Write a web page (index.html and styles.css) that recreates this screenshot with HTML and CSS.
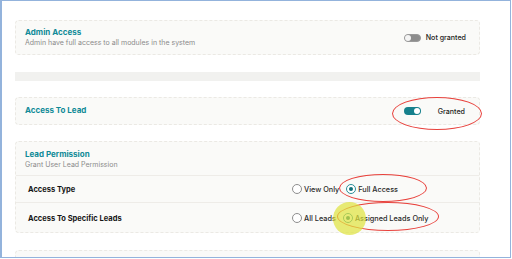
FILE: index.html
```html
<!DOCTYPE html>
<html>
<head>
<meta charset="utf-8">
<link rel="stylesheet" href="styles.css">
</head>
<body>
<div class="frame">
  <section class="card card-admin">
    <div class="head">
      <div class="title">Admin Access</div>
      <div class="sub">Admin have full access to all modules in the system</div>
    </div>
    <div class="switch-wrap">
      <span class="switch off"><span class="knob"></span></span>
      <span class="switch-label">Not granted</span>
    </div>
  </section>

  <div class="band"></div>

  <section class="card card-lead">
    <div class="head">
      <div class="title">Access To Lead</div>
    </div>
    <div class="switch-wrap">
      <span class="switch on"><span class="knob"></span></span>
      <span class="switch-label granted">Granted</span>
    </div>
  </section>

  <section class="card card-perm">
    <div class="perm-head">
      <div class="title">Lead Permission</div>
      <div class="sub">Grant User Lead Permission</div>
    </div>
    <div class="row">
      <div class="row-label">Access Type</div>
      <div class="opts">
        <label class="opt"><span class="radio"></span>View Only</label>
        <label class="opt"><span class="radio checked"></span>Full Access</label>
      </div>
    </div>
    <div class="row row-last">
      <div class="row-label">Access To Specific Leads</div>
      <div class="opts">
        <label class="opt"><span class="radio"></span>All Leads</label>
        <label class="opt"><span class="radio checked"></span>Assigned Leads Only</label>
      </div>
    </div>
  </section>

  <section class="card card-next"></section>

  <div class="ring ring-granted"></div>
  <div class="ring ring-full"></div>
  <div class="ring ring-assigned"></div>
  <div class="click-dot"></div>
</div>
</body>
</html>
```

FILE: styles.css
```css
html, body {
  margin: 0;
  padding: 0;
  background: #ffffff;
}
body {
  font-family: Inter, "Noto Sans", "Liberation Sans", sans-serif;
}
.frame {
  position: relative;
  box-sizing: border-box;
  width: 511px;
  height: 258px;
  border: 1px solid #93b3dc;
  border-left-width: 2px;
  padding: 19px 30px 0 13px;
  overflow: hidden;
  background: #ffffff;
}
.card {
  box-sizing: border-box;
  background: #fafaf8;
  border: 1px dashed #ebe9e4;
  border-radius: 4px;
}
.card-admin {
  height: 35px;
  display: flex;
  align-items: center;
  justify-content: space-between;
  padding: 0 13px 0 9px;
}
.title {
  font-size: 8px;
  font-weight: 700;
  color: #0f8a97;
  line-height: 10px;
}
.sub {
  font-size: 7px;
  color: #8b8b8b;
  line-height: 9px;
  margin-top: 1px;
}
.card-admin .head {
  margin-top: -1px;
}
.switch-wrap {
  display: flex;
  align-items: center;
}
.switch {
  position: relative;
  box-sizing: border-box;
  width: 17px;
  height: 8px;
  border-radius: 4px;
  display: inline-block;
}
.switch.off {
  background: #8d8d8d;
  border: 1px solid #9a9a9a;
}
.switch.on {
  background: #16808c;
}
.knob {
  position: absolute;
  top: 1px;
  width: 6px;
  height: 6px;
  border-radius: 50%;
  background: #ffffff;
}
.switch.off .knob {
  top: 0;
  left: 0;
  background: #f4f4f4;
}
.switch.on .knob {
  right: 1px;
}
.switch-label {
  font-size: 7.1px;
  font-weight: 500;
  color: #222222;
  margin-left: 5px;
}
.switch-label.granted {
  margin-left: 17px;
}
.band {
  height: 9px;
  margin-top: 17px;
  background: #f1f1ef;
}
.card-lead {
  margin-top: 16px;
  height: 28px;
  display: flex;
  align-items: center;
  justify-content: space-between;
  padding: 0 14px 0 9px;
}
.card-lead .title {
  margin-top: -2px;
}
.card-perm {
  margin-top: 16px;
  height: 92px;
}
.perm-head {
  height: 34px;
  box-sizing: border-box;
  padding: 7px 9px 0;
  border-bottom: 1px solid #eeece8;
}
.row {
  display: grid;
  grid-template-columns: 264px 1fr;
  align-items: center;
  height: 26px;
  padding-left: 12px;
  border-bottom: 1px solid #eeece8;
}
.row-last {
  border-bottom: none;
  height: 30px;
}
.row-label {
  font-size: 7.5px;
  font-weight: 700;
  color: #151515;
}
.opts {
  display: flex;
  align-items: center;
}
.opt {
  display: flex;
  align-items: center;
  font-size: 7.3px;
  font-weight: 500;
  color: #2a2a2a;
  margin-right: 7px;
}
.radio {
  box-sizing: border-box;
  width: 10px;
  height: 10px;
  border-radius: 50%;
  border: 1px solid #8e8e8e;
  background: #ffffff;
  margin-right: 2px;
  display: inline-block;
  position: relative;
}
.radio.checked {
  border-color: #2a8e98;
}
.radio.checked::after {
  content: "";
  position: absolute;
  left: 2px;
  top: 2px;
  width: 4px;
  height: 4px;
  border-radius: 50%;
  background: #0f6f78;
}
.card-next {
  margin-top: 17px;
  height: 30px;
}
.ring {
  position: absolute;
  border: 1px solid #e8413c;
  border-radius: 50%;
}
.ring-granted {
  left: 390px;
  top: 96px;
  width: 88px;
  height: 31px;
}
.ring-full {
  left: 337px;
  top: 173px;
  width: 86px;
  height: 26px;
}
.ring-assigned {
  left: 335px;
  top: 201px;
  width: 100px;
  height: 27px;
}
.click-dot {
  position: absolute;
  left: 331px;
  top: 201px;
  width: 33px;
  height: 33px;
  border-radius: 50%;
  background: rgba(222, 226, 60, 0.7);
}
```
